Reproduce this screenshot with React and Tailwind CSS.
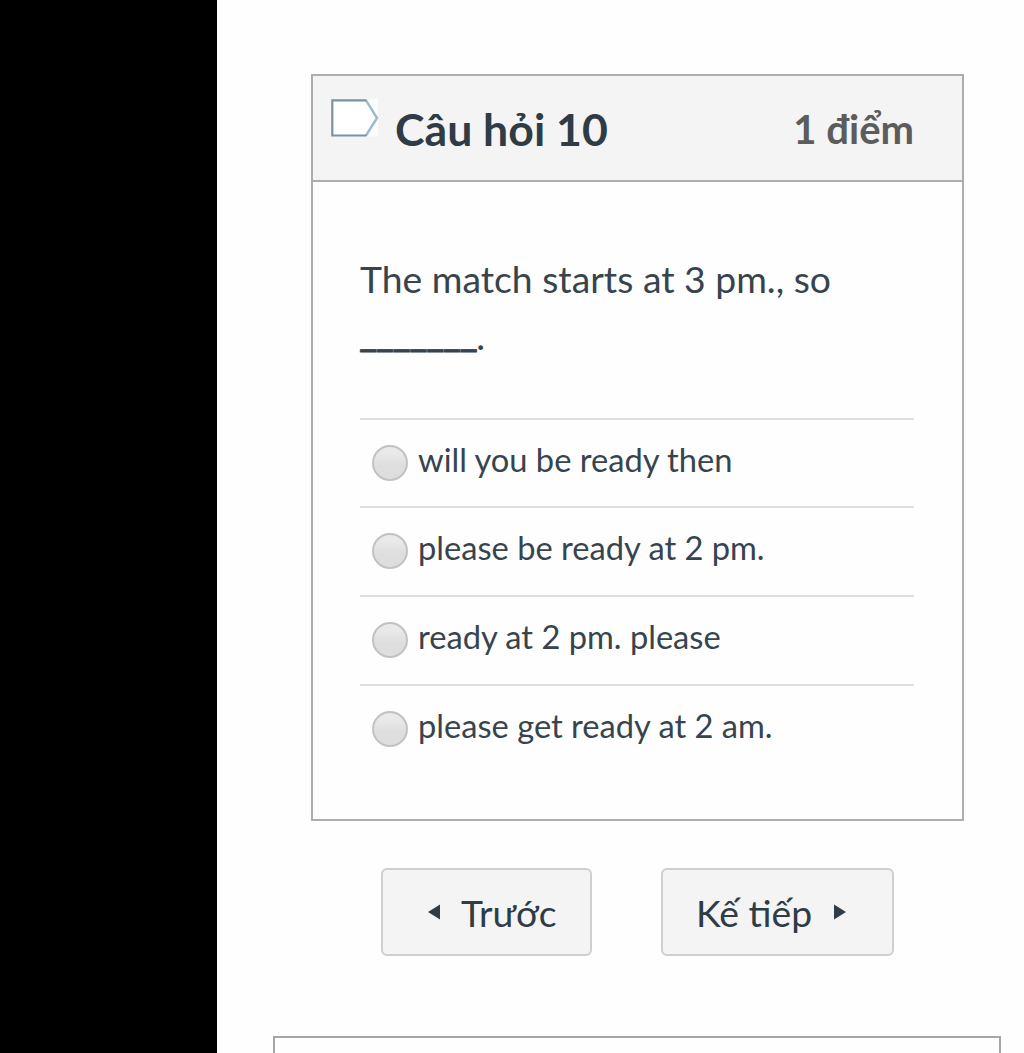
import { useState } from "react";

const answers = [
  "will you be ready then",
  "please be ready at 2 pm.",
  "ready at 2 pm. please",
  "please get ready at 2 am.",
];

export default function App() {
  const [selected, setSelected] = useState(null);

  return (
    <div className="flex h-[1053px] w-[1024px] overflow-hidden bg-[#fefefe] font-['Lato',sans-serif] text-[#37444d]">
      <aside className="w-[217px] shrink-0 bg-black" />

      <main className="flex flex-1 flex-col">
        <section className="mt-[74px] ml-[94px] h-[747px] w-[653px] shrink-0 border-2 border-[#adadad]">
          <header className="flex h-[106px] border-b-2 border-[#adadad] bg-[#f4f4f4] pr-12 pl-[18px]">
            <svg className="mt-[23px] h-[40px] w-[50px] shrink-0" viewBox="0 0 50 40" fill="none">
              <path d="M35 0H47V37.5H35Z" fill="#fafcfd" />
              <path d="M1.3 1.3H35L46 19L35 36.5H1.3Z" fill="#fff" />
              <path d="M35 1.3L46 19L35 36.5" stroke="#9dbace" strokeWidth="2.4" />
              <path d="M35.5 1.3H1.3V36.5H35.5" stroke="#7893a6" strokeWidth="2.2" />
            </svg>
            <h1 className="mt-[27px] ml-[14px] text-[44.6px] leading-[52px] font-bold whitespace-nowrap text-[#2f3c46]">
              Câu hỏi 10
            </h1>
            <span className="mt-[29px] ml-auto text-[40px] leading-[48px] font-bold whitespace-nowrap text-[#5c5c5c]">
              1 điểm
            </span>
          </header>

          <div className="pr-12 pl-[47px] pt-[69px]">
            <p className="h-[166.7px] text-[37.3px] leading-[56px] whitespace-nowrap">
              The match starts at 3 pm., so
              <br />
              <span className="-ml-px inline-block -translate-y-[4px] text-[40px] tracking-[-1.6px] [-webkit-text-stroke:0.8px_currentColor]">
                _______
              </span>
              .
            </p>

            {answers.map((answer, idx) => (
              <label key={answer} className="flex h-[88.7px] border-t-2 border-[#dddddd] pl-3">
                <input
                  type="radio"
                  name="answer"
                  checked={selected === idx}
                  onChange={() => setSelected(idx)}
                  className="mt-[25px] h-9 w-9 shrink-0 appearance-none rounded-full border-2 border-[#c2c2c2] bg-linear-to-b from-[#e9e9e9] from-20% to-[#dedede] to-60% checked:border-[#2d3b45]"
                />
                <span className="mt-[19px] ml-[10px] text-[32.65px] leading-[42px] whitespace-nowrap">{answer}</span>
              </label>
            ))}
          </div>
        </section>

        <nav className="mt-[47px] flex shrink-0 gap-[69px] pl-[164px] text-[37.3px] text-[#2f3c46]">
          <button className="flex h-[88px] w-[211px] items-center rounded-md border-2 border-[#cdd0d2] bg-[#f4f4f4] pl-[45px]">
            <svg className="h-4 w-3" viewBox="0 0 12 16" fill="currentColor">
              <path d="M12 0.5V15.5L0 8Z" />
            </svg>
            <span className="mt-0.5 ml-[21px] whitespace-nowrap">Trước</span>
          </button>
          <button className="flex h-[88px] w-[233px] items-center rounded-md border-2 border-[#cdd0d2] bg-[#f4f4f4] pl-[33px]">
            <span className="mt-0.5 whitespace-nowrap">Kế tiếp</span>
            <svg className="ml-[22px] h-4 w-3" viewBox="0 0 12 16" fill="currentColor">
              <path d="M0 0.5V15.5L12 8Z" />
            </svg>
          </button>
        </nav>

        <section className="mt-[80px] ml-[56px] h-24 w-[728px] shrink-0 border-2 border-[#a6a6a6]" />
      </main>
    </div>
  );
}
